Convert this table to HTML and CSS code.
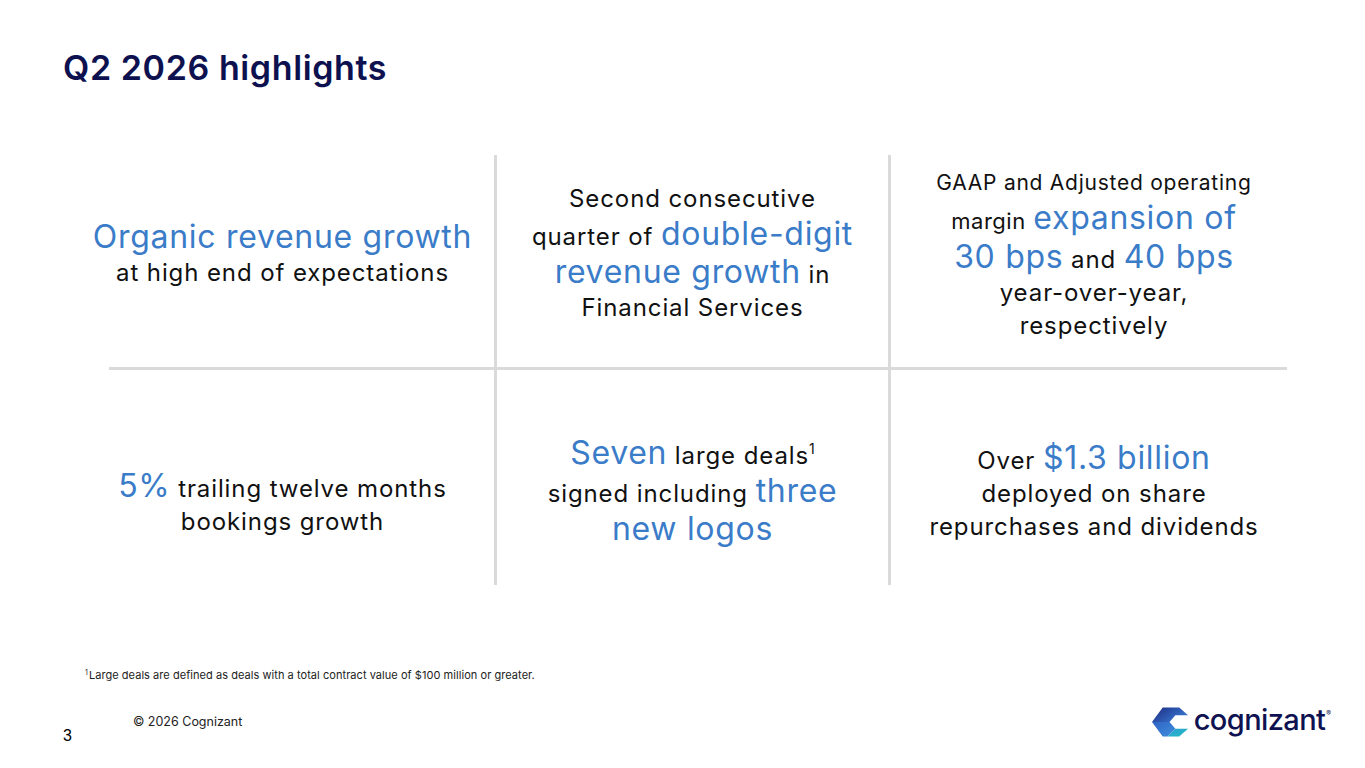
FILE: index.html
```html
<!DOCTYPE html>
<html lang="en">
<head>
<meta charset="utf-8">
<title>Q2 2026 highlights</title>
<link rel="stylesheet" href="styles.css">
</head>
<body>
<div class="slide">
  <h1 class="title">Q2 2026 highlights</h1>
  <div class="grid">
    <div class="cell top c1">
      <div class="txt"><span class="hl">Organic revenue growth</span><br>at high end of expectations</div>
    </div>
    <div class="cell top c2">
      <div class="txt">Second consecutive<br>quarter of <span class="hl">double-digit</span><br><span class="hl">revenue growth</span> in<br>Financial Services</div>
    </div>
    <div class="cell top c3">
      <div class="txt"><span class="s20">GAAP and Adjusted operating</span><br><span class="s22">margin</span> <span class="hl">expansion of</span><br><span class="hl">30 bps</span> and <span class="hl">40 bps</span><br>year-over-year,<br>respectively</div>
    </div>
    <div class="cell bottom c1">
      <div class="txt"><span class="hl">5%</span> trailing twelve months<br>bookings growth</div>
    </div>
    <div class="cell bottom c2">
      <div class="txt"><span class="hl">Seven</span> large deals<sup class="sup">1</sup><br>signed including <span class="hl">three</span><br><span class="hl">new logos</span></div>
    </div>
    <div class="cell bottom c3">
      <div class="txt">Over <span class="hl">$1.3 billion</span><br>deployed on share<br>repurchases and dividends</div>
    </div>
  </div>
  <p class="footnote"><sup>1</sup>Large deals are defined as deals with a total contract value of $100 million or greater.</p>
  <div class="footer">
    <span class="pagenum">3</span>
    <span class="copy">© 2026 Cognizant</span>
    <div class="logo">
      <svg class="mark" width="37" height="32" viewBox="0 0 38 32" aria-hidden="true">
        <defs>
          <linearGradient id="gA" x1="0" y1="0" x2="1" y2="0.6">
            <stop offset="0" stop-color="#1b2a7e"/>
            <stop offset="1" stop-color="#3a78d4"/>
          </linearGradient>
          <linearGradient id="gB" x1="0" y1="0" x2="1" y2="1">
            <stop offset="0" stop-color="#2f63c4"/>
            <stop offset="1" stop-color="#3f90dc"/>
          </linearGradient>
          <linearGradient id="gC" x1="0" y1="0" x2="1" y2="1">
            <stop offset="0" stop-color="#2a9fd2"/>
            <stop offset="1" stop-color="#27bcc4"/>
          </linearGradient>
        </defs>
        <polygon points="0,16 11,1 28,1 37,9 24,9 18,16" fill="url(#gA)"/>
        <polygon points="0,16 18,16 24,23 16,31 11,31" fill="url(#gB)"/>
        <polygon points="24,23 37,23 28,31 16,31" fill="url(#gC)"/>
      </svg>
      <span class="word">cognizant</span><span class="reg">®</span>
    </div>
  </div>
</div>
</body>
</html>
```

FILE: styles.css
```css
html, body {
  margin: 0;
  padding: 0;
  background: #ffffff;
}

.slide {
  width: 1365px;
  height: 768px;
  overflow: hidden;
  display: flex;
  flex-direction: column;
  font-family: "Inter", "Liberation Sans", sans-serif;
  color: #111111;
  background: #ffffff;
}

.title {
  margin: 48px 0 0 63px;
  font-size: 34px;
  line-height: 40px;
  font-weight: 600;
  color: #0d1150;
  letter-spacing: 0.6px;
}

.grid {
  margin: 67px 0 0 109px;
  width: 1178px;
  display: grid;
  grid-template-columns: 385px 394px 399px;
  grid-template-rows: 215px 215px;
}

.cell {
  display: flex;
  align-items: center;
  justify-content: center;
  text-align: center;
  box-sizing: border-box;
}

.cell.top {
  border-bottom: 3px solid #dadada;
  padding-bottom: 16px;
}

.cell.bottom {
  padding-top: 26px;
}

.cell.bottom.c1 {
  padding-top: 50px;
}

.cell.c1 {
  padding-right: 38px;
}

.cell.c2,
.cell.c3 {
  border-left: 3px solid #dadada;
}

.cell.c3 {
  padding-left: 10px;
}

.txt {
  white-space: nowrap;
  font-size: 24px;
  line-height: 33px;
  letter-spacing: 0.9px;
  color: #111111;
}

.hl {
  font-size: 32px;
  line-height: 38px;
  letter-spacing: 0.7px;
  color: #3b7cc9;
}

.s20 {
  font-size: 21px;
  letter-spacing: 0.75px;
}

.s22 {
  font-size: 22px;
  letter-spacing: 0.5px;
}

.sup {
  font-size: 14px;
  vertical-align: 10px;
  line-height: 0;
  letter-spacing: 0;
}

.footnote {
  margin: 83px 0 0 85px;
  font-size: 11px;
  line-height: 14px;
  color: #222222;
  letter-spacing: 0.05px;
}

.footnote sup {
  font-size: 7px;
  vertical-align: 4px;
  line-height: 0;
  margin-right: 1px;
}

.footer {
  margin-top: 23px;
  display: flex;
  align-items: flex-start;
}

.pagenum {
  margin: 21px 0 0 63px;
  font-family: "Liberation Sans", sans-serif;
  font-size: 16px;
  line-height: 20px;
  color: #000000;
}

.copy {
  margin: 9px 0 0 61px;
  font-size: 12.5px;
  line-height: 16px;
  color: #222222;
}

.logo {
  margin-left: auto;
  margin-right: 34px;
  display: flex;
  align-items: center;
  height: 34px;
}

.mark {
  display: block;
  margin-right: 5px;
}

.word {
  font-size: 29px;
  line-height: 34px;
  font-weight: 500;
  color: #0f1250;
  letter-spacing: -0.6px;
  margin-top: -4px;
}

.reg {
  font-size: 7px;
  color: #0f1250;
  align-self: flex-start;
  margin-top: 4px;
  margin-left: 1px;
}
```
